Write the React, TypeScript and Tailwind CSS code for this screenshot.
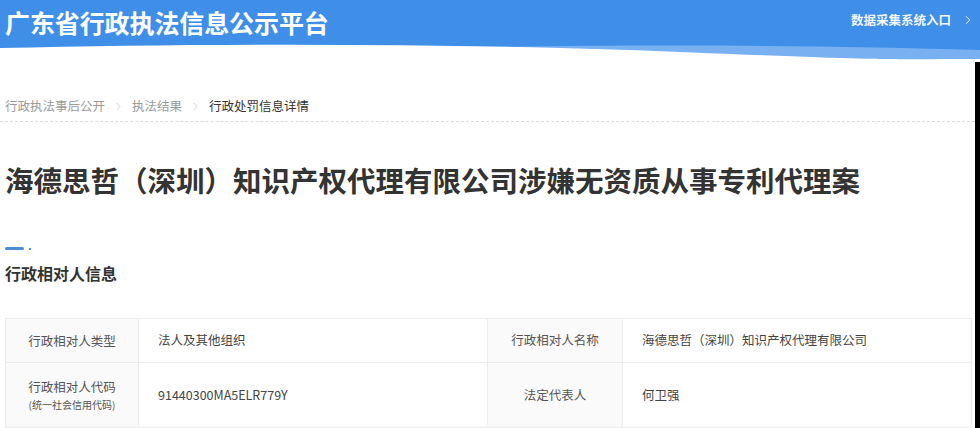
import { ChevronRight } from 'lucide-react';

const font = "font-['Noto_Sans_CJK_SC','Noto_Sans',sans-serif]";

function Header() {
  return (
    <div>
      <div className="flex h-[44px] items-center justify-between bg-[#3f8fe9] pl-[5px] pr-[5px]">
        <h1 className="text-[25px] font-bold leading-none tracking-[-0.1px] text-white">
          广东省行政执法信息公示平台
        </h1>
        <a className="mt-[-4px] flex items-center gap-[10px] text-[12.5px] font-bold text-white/95">
          数据采集系统入口
          <ChevronRight size={14} strokeWidth={1.6} />
        </a>
      </div>
      <svg className="block h-[18px] w-full" viewBox="0 0 980 18" preserveAspectRatio="none">
        <rect x="0" y="0" width="980" height="18" fill="#3f8fe9" />
        <path d="M460 4 C 620 0, 820 1, 980 6 V18 H460 Z" fill="#79b0f1" />
        <path d="M0 4 C 220 -1, 460 -1, 680 8 S 880 15, 980 15 V18 H0 Z" fill="#ffffff" />
      </svg>
    </div>
  );
}

function Breadcrumb() {
  return (
    <div className="border-b border-dashed border-[#dcdcdc] pb-[5px] pl-[5px]">
      <div className="flex items-center text-[12.5px] leading-[20px]">
        <span className="text-[#9a9a9a]">行政执法事后公开</span>
        <ChevronRight size={13} strokeWidth={1.4} className="mx-[7px] text-[#c4c4c4]" />
        <span className="text-[#9a9a9a]">执法结果</span>
        <ChevronRight size={13} strokeWidth={1.4} className="mx-[7px] text-[#c4c4c4]" />
        <span className="text-[#333]">行政处罚信息详情</span>
      </div>
    </div>
  );
}

const rows = [
  {
    l1: '行政相对人类型',
    v1: '法人及其他组织',
    l2: '行政相对人名称',
    v2: '海德思哲（深圳）知识产权代理有限公司',
    h: 'h-[44px]',
  },
  {
    l1: '行政相对人代码',
    sub: '(统一社会信用代码)',
    v1: '91440300MA5ELR779Y',
    l2: '法定代表人',
    v2: '何卫强',
    h: 'h-[65px]',
  },
];

function InfoTable() {
  return (
    <table className="ml-[5px] mt-[33px] w-[966px] table-fixed border-collapse text-[12.5px] text-[#555]">
      <colgroup>
        <col className="w-[133px]" />
        <col className="w-[349px]" />
        <col className="w-[135px]" />
        <col className="w-[349px]" />
      </colgroup>
      <tbody>
        {rows.map((r) => (
          <tr key={r.l1} className={r.h}>
            <td className="border border-[#ececec] bg-[#fafafa] text-center align-middle">
              <div className="leading-[18px]">{r.l1}</div>
              {r.sub && <div className="mt-[2px] text-[10px] leading-[14px]">{r.sub}</div>}
            </td>
            <td className="border border-[#ececec] pl-[19px] align-middle text-[#444]">{r.v1}</td>
            <td className="border border-[#ececec] bg-[#fafafa] text-center align-middle">{r.l2}</td>
            <td className="border border-[#ececec] pl-[19px] align-middle text-[#444]">{r.v2}</td>
          </tr>
        ))}
      </tbody>
    </table>
  );
}

export default function App() {
  return (
    <div className={`h-[428px] overflow-hidden bg-white ${font}`}>
      <Header />
      <div className="border-r-[5px] border-black pt-[34px]">
        <Breadcrumb />
        <h2 className="mt-[38px] pl-[5px] text-[28.5px] font-bold leading-[40px] text-[#333]">
          海德思哲（深圳）知识产权代理有限公司涉嫌无资质从事专利代理案
        </h2>
        <div className="mt-[47px] flex items-center pl-[5px]">
          <span className="h-[3px] w-[19px] rounded-full bg-[#4a8fd6]" />
          <span className="ml-[5px] h-[2px] w-[2px] bg-[#4a8fd6]" />
        </div>
        <h3 className="mt-[11px] pl-[5px] text-[16px] font-bold leading-[24px] text-[#333]">
          行政相对人信息
        </h3>
        <InfoTable />
        <div className="h-[40px]" />
      </div>
    </div>
  );
}
